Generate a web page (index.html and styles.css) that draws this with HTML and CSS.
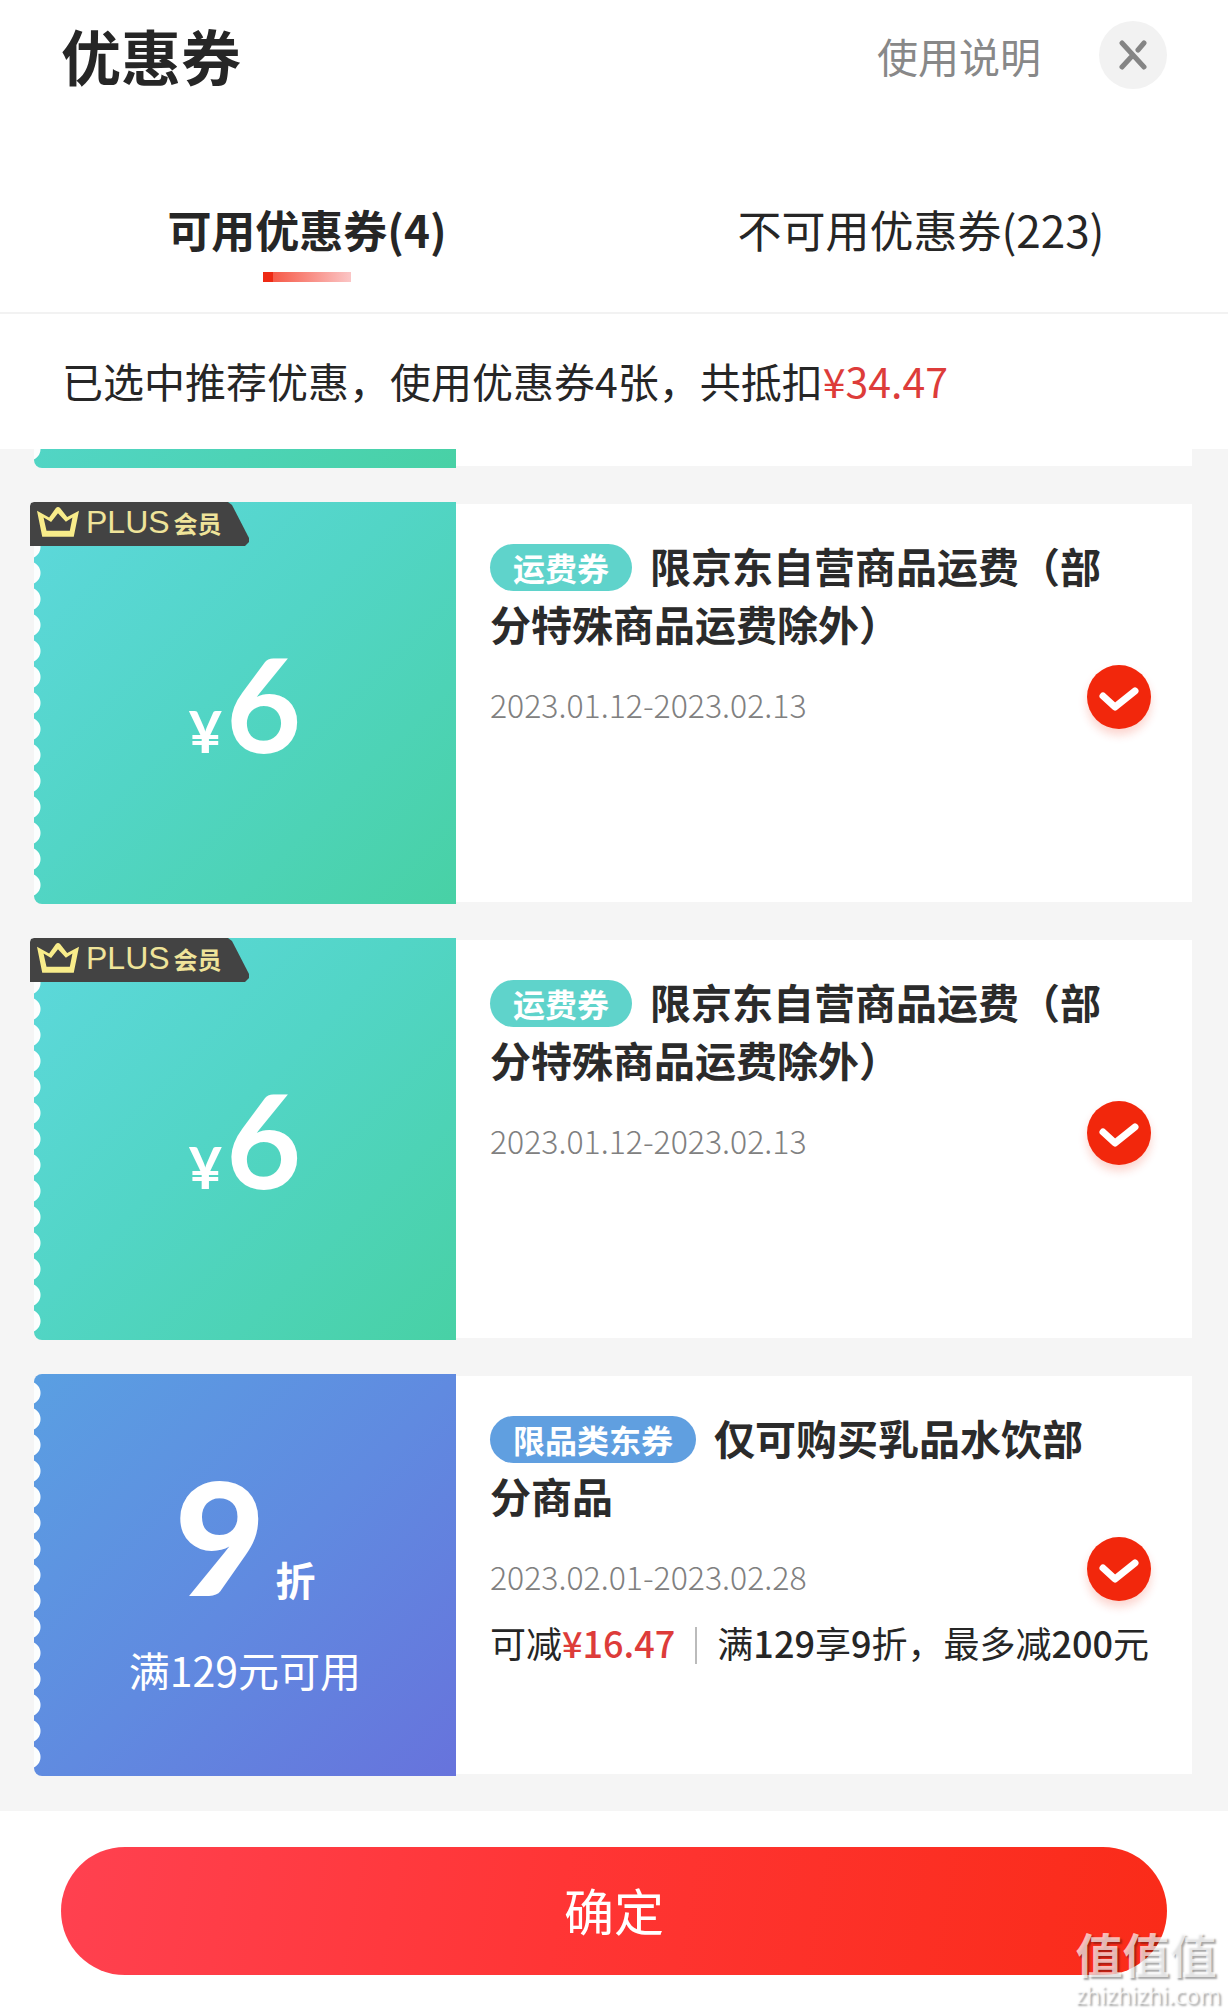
FILE: index.html
```html
<!DOCTYPE html>
<html lang="zh-CN">
<head>
    <meta charset="UTF-8">
    <meta name="viewport" content="width=device-width, initial-scale=1.0">
    <title>优惠券</title>
    <link rel="stylesheet" href="styles.css">
</head>
<body>
    <header class="header">
        <h1>优惠券</h1>
        <a href="#" class="help-link">使用说明</a>
        <button type="button" class="close-btn" aria-label="关闭">
            <svg width="30" height="30" viewBox="0 0 30 30" fill="none" stroke="#858585" stroke-width="5" stroke-linecap="round">
                <path d="M4 3L26 27M4 27L15 15M20 10L26 3"/>
            </svg>
        </button>
    </header>

    <nav class="tabs">
        <button type="button" class="tab active">可用优惠券(4)</button>
        <button type="button" class="tab">不可用优惠券(223)</button>
    </nav>

    <p class="notice">已选中推荐优惠，使用优惠券4张，共抵扣<span class="price">¥34.47</span></p>

    <main class="coupon-list">
        <!-- coupon scrolled under the notice -->
        <div class="coupon-peek">
            <div class="coupon">
                <div class="coupon-amount teal"></div>
                <div class="coupon-body"></div>
            </div>
        </div>

        <div class="coupon">
            <div class="coupon-amount teal">
                <div class="plus-badge">
                    <svg width="44" height="32" viewBox="108 74 134 96" fill="#f8ec8a" fill-rule="evenodd">
                        <path d="M111 88L148 108L168 80Q175 73 182 80L203 107L239 88L223 167H127ZM131 108L140 149H211L219 108L199 121L175 95L154 122Z"/>
                    </svg>
                    <span class="plus-text">PLUS</span><span class="plus-member">会员</span>
                </div>
                <div class="amount"><span class="yen">¥</span><span class="number">6</span></div>
            </div>
            <div class="coupon-body">
                <h2><span class="tag teal-tag">运费券</span>限京东自营商品运费（部分特殊商品运费除外）</h2>
                <div class="coupon-row">
                    <label class="date" for="coupon-1">2023.01.12-2023.02.13</label>
                    <input type="checkbox" class="check" id="coupon-1" checked>
                </div>
            </div>
        </div>

        <div class="coupon">
            <div class="coupon-amount teal">
                <div class="plus-badge">
                    <svg width="44" height="32" viewBox="108 74 134 96" fill="#f8ec8a" fill-rule="evenodd">
                        <path d="M111 88L148 108L168 80Q175 73 182 80L203 107L239 88L223 167H127ZM131 108L140 149H211L219 108L199 121L175 95L154 122Z"/>
                    </svg>
                    <span class="plus-text">PLUS</span><span class="plus-member">会员</span>
                </div>
                <div class="amount"><span class="yen">¥</span><span class="number">6</span></div>
            </div>
            <div class="coupon-body">
                <h2><span class="tag teal-tag">运费券</span>限京东自营商品运费（部分特殊商品运费除外）</h2>
                <div class="coupon-row">
                    <label class="date" for="coupon-2">2023.01.12-2023.02.13</label>
                    <input type="checkbox" class="check" id="coupon-2" checked>
                </div>
            </div>
        </div>

        <div class="coupon">
            <div class="coupon-amount blue">
                <div class="amount"><span class="number big">9</span><span class="unit">折</span></div>
                <p class="condition">满129元可用</p>
            </div>
            <div class="coupon-body">
                <h2><span class="tag blue-tag">限品类东券</span>仅可购买乳品水饮部分商品</h2>
                <div class="coupon-row">
                    <label class="date" for="coupon-3">2023.02.01-2023.02.28</label>
                    <input type="checkbox" class="check" id="coupon-3" checked>
                </div>
                <p class="detail">
                    <span>可减<b class="price">¥16.47</b></span>
                    <span class="rule">满<b>129</b>享<b>9</b>折，最多减<b>200</b>元</span>
                </p>
            </div>
        </div>
    </main>

    <footer class="footer">
        <button type="button" class="confirm-btn">确定</button>
    </footer>

    <div class="watermark">
        <span class="watermark-name">值值值</span>
        <span class="watermark-url">zhizhizhi.com</span>
    </div>
</body>
</html>
```
FILE: styles.css
```css
* {
    box-sizing: border-box;
}
body {
    position: relative;
    margin: 0;
    min-height: 100vh;
    background-color: #fff;
    color: #262626;
    font-family: "Noto Sans CJK SC", sans-serif;
}
h1, h2, p {
    margin: 0;
}
button {
    border: none;
    padding: 0;
    background: none;
    color: inherit;
    font-family: inherit;
    cursor: pointer;
}
.header {
    display: flex;
    align-items: center;
    height: 110px;
    padding: 0 61px;
}
h1 {
    flex: 1;
    font-size: 60px;
    line-height: 88px;
}
.help-link {
    margin-right: 58px;
    color: #888;
    font-size: 41px;
    line-height: 58px;
    text-decoration: none;
}
.close-btn {
    display: flex;
    justify-content: center;
    align-items: center;
    width: 68px;
    height: 68px;
    border-radius: 50%;
    background-color: #f2f2f2;
}
.tabs {
    display: flex;
    padding-top: 90px;
    border-bottom: 2px solid #f2f2f2;
}
.tab {
    flex: 1;
    padding-bottom: 30px;
    font-size: 44px;
    line-height: 58px;
}
.tab::after {
    content: "";
    display: block;
    width: 88px;
    height: 10px;
    margin: 14px auto 0;
}
.tab.active {
    font-weight: bold;
}
.tab.active::after {
    background: linear-gradient(to right, #ee2a14 10px, #f65a48 10px, #fbc6c6);
}
.notice {
    padding: 0 62px 3px;
    font-size: 41px;
    line-height: 132px;
}
.price {
    color: #dd3c3a;
}
.coupon-list {
    display: flex;
    flex-direction: column;
    gap: 34px;
    padding: 0 36px 35px 34px;
    background-color: #f5f5f5;
}
.coupon-peek {
    display: flex;
    align-items: flex-end;
    height: 19px;
    overflow: hidden;
}
.coupon {
    display: flex;
    flex: 1 0 auto;
    min-height: 402px;
}
.coupon-amount {
    position: relative;
    display: flex;
    flex-direction: column;
    flex-shrink: 0;
    justify-content: center;
    align-items: center;
    gap: 26px;
    width: 422px;
    border-radius: 8px 0 0 8px;
    color: #fff;
}
/* ticket edge */
.coupon-amount::before {
    content: "";
    position: absolute;
    top: 6px;
    bottom: 6px;
    left: 0;
    width: 12px;
    background: radial-gradient(circle at -5px 13px, #fcfefe 11px, transparent 12px) 0 0 / 12px 26px repeat-y;
}
.teal {
    background: linear-gradient(135deg, #5dd8dc, #52d5c6 45%, #48d1a5);
}
.blue {
    padding-top: 4px;
    background: linear-gradient(135deg, #5a9fe2, #608ae0 52%, #6773dc);
}
.plus-badge {
    position: absolute;
    top: 0;
    left: -4px;
    display: flex;
    align-items: center;
    width: 219px;
    height: 44px;
    padding: 0 0 4px 6px;
    background-color: #434343;
    clip-path: polygon(0 4px, 1px 1px, 4px 0, 198px 0, 202px 3px, 219px 36px, 219px 40px, 215px 44px, 0 44px);
    color: #efe49a;
}
.plus-text {
    margin: 0 4px 0 6px;
    font-family: "Liberation Sans", sans-serif;
    font-size: 32px;
}
.plus-member {
    font-size: 24px;
    font-weight: bold;
}
.amount {
    display: flex;
    align-items: baseline;
    font-family: Lato, sans-serif;
    font-weight: bold;
    line-height: 1;
}
.yen {
    margin-right: 4px;
    font-size: 58px;
}
.number {
    font-size: 130px;
}
.number.big {
    font-size: 157px;
    font-weight: 900;
}
.unit {
    margin-left: 10px;
    font-family: "Noto Sans CJK SC", sans-serif;
    font-size: 40px;
}
.condition {
    font-size: 41px;
    line-height: 58px;
}
.coupon-body {
    flex: 1;
    margin: 2px 0;
    padding: 32px 41px 0 34px;
    background-color: #fff;
}
h2 {
    padding-right: 41px;
    color: #2b2b2b;
    font-size: 41px;
    line-height: 58px;
}
.tag {
    display: inline-block;
    margin-right: 18px;
    padding: 0 23px;
    border-radius: 24px;
    color: #fff;
    font-size: 32px;
    line-height: 47px;
    vertical-align: 2px;
}
.teal-tag {
    background-color: #5fd3cb;
}
.blue-tag {
    background-color: #609fe0;
}
.coupon-row {
    display: flex;
    justify-content: space-between;
    align-items: flex-end;
    margin-top: 13px;
}
.date {
    color: #808080;
    font-size: 32px;
    font-weight: 300;
    line-height: 50px;
}
.check {
    appearance: none;
    width: 64px;
    height: 64px;
    margin: 0;
    border: 2px solid #ccc;
    border-radius: 50%;
    cursor: pointer;
}
.check:checked {
    border: none;
    background: #f2270c url("data:image/svg+xml,%3Csvg xmlns='http://www.w3.org/2000/svg' viewBox='0 0 64 64'%3E%3Cpath d='M16 31L28 42L48 26' fill='none' stroke='white' stroke-width='7' stroke-linecap='round' stroke-linejoin='round'/%3E%3C/svg%3E");
    box-shadow: 0 6px 10px rgba(242, 39, 12, 0.2);
}
.detail {
    display: flex;
    align-items: center;
    margin-top: 12px;
    font-size: 36px;
    line-height: 58px;
    white-space: nowrap;
}
.detail b {
    font-weight: 500;
}
.rule::before {
    content: "";
    display: inline-block;
    width: 2px;
    height: 37px;
    margin: 0 20px;
    background-color: #bbb;
    vertical-align: -6px;
}
.footer {
    padding: 36px 61px 38px;
}
.confirm-btn {
    display: block;
    width: 100%;
    height: 128px;
    padding-bottom: 4px;
    border-radius: 64px;
    background: linear-gradient(100deg, #ff4150, #ff3535 45%, #fa2b18);
    color: #fff;
    font-size: 50px;
}
.watermark {
    position: absolute;
    right: 7px;
    bottom: 4px;
    display: flex;
    flex-direction: column;
    color: rgba(255, 255, 255, 0.7);
    text-shadow: 2px 2px 2px rgba(0, 0, 0, 0.35);
}
.watermark-name {
    font-size: 47px;
    font-weight: bold;
    line-height: 56px;
}
.watermark-url {
    font-family: "Noto Sans", sans-serif;
    font-size: 23px;
    line-height: 28px;
}
```
